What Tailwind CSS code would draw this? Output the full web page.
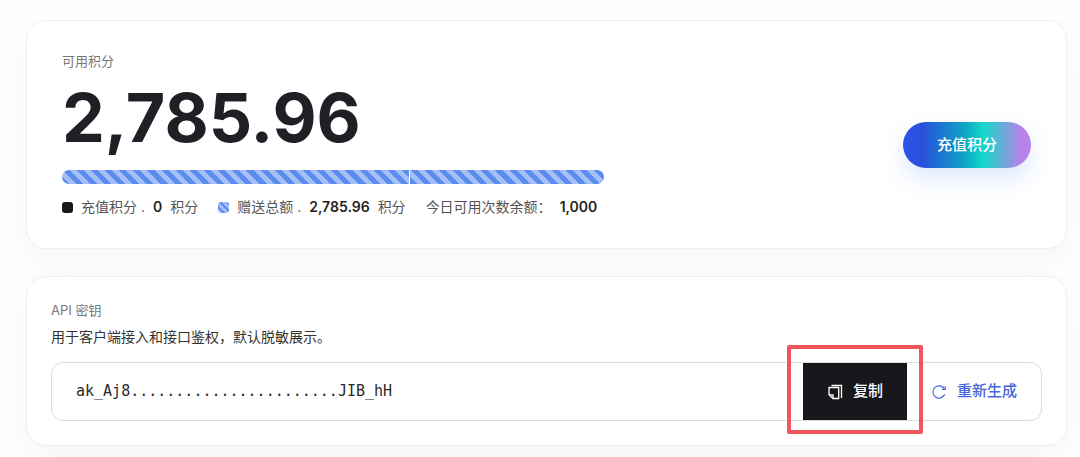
<!doctype html>
<html lang="zh-CN">
  <head>
    <meta charset="UTF-8" />
    <meta name="viewport" content="width=device-width, initial-scale=1.0" />
    <title>可用积分</title>
    <script src="https://cdn.jsdelivr.net/npm/@tailwindcss/browser@4"></script>
  </head>
  <body
    class="bg-[#fefefe] font-['Inter','Noto_Sans_CJK_SC',sans-serif] text-[#1f1f26]"
  >
    <main class="flex flex-col gap-[27px] pt-5 pr-[13px] pb-3 pl-[26px]">
      <section
        class="flex items-center justify-between rounded-[20px] border border-[#efefef] bg-white px-[35px] pt-[30px] pb-[29px] shadow-[0_16px_40px_rgba(0,0,0,0.035)]"
      >
        <div>
          <h2 class="text-[13px] leading-5 text-[#777]">可用积分</h2>
          <p class="mt-[7px] text-[68px] leading-[78px] font-bold">2,785.96</p>
          <div
            class="mt-[14px] flex h-[14px] gap-px overflow-hidden rounded-full"
          >
            <div
              class="w-[64%] bg-[repeating-linear-gradient(45deg,#5b8def_0_5px,#a5bef5_5px_10px)]"
            ></div>
            <div
              class="flex-1 bg-[repeating-linear-gradient(45deg,#5b8def_0_5px,#a5bef5_5px_10px)]"
            ></div>
          </div>
          <ul
            class="mt-[11px] flex w-[542px] items-center gap-5 text-[14px] leading-6 whitespace-nowrap text-[#555]"
          >
            <li class="flex items-center gap-2">
              <span class="size-[11px] rounded-[3px] bg-[#18181b]"></span>
              <span>充值积分 .</span>
              <strong class="font-semibold text-[#1f1f1f]">0</strong>
              <span>积分</span>
            </li>
            <li class="flex items-center gap-2">
              <span
                class="size-[11px] rounded-[3px] bg-[repeating-linear-gradient(45deg,#a5bef5_0_3px,#5b8def_3px_5px)]"
              ></span>
              <span>赠送总额 .</span>
              <strong class="font-semibold text-[#1f1f1f]">2,785.96</strong>
              <span>积分</span>
            </li>
            <li class="flex items-center gap-2">
              <span>今日可用次数余额：</span>
              <strong class="font-semibold text-[#1f1f1f]">1,000</strong>
            </li>
          </ul>
        </div>
        <button
          type="button"
          class="mt-5 h-[46px] w-32 rounded-full bg-[linear-gradient(90deg,#2f54eb_0%,#2850dc_15%,#0ea5c6_48%,#14d8c8_63%,#b583ea_92%)] text-[15px] font-medium text-white shadow-[0_10px_24px_rgba(59,130,246,0.18)]"
        >
          充值积分
        </button>
      </section>

      <section
        class="rounded-[20px] border border-[#efefef] bg-white px-6 pt-[23px] pb-6 shadow-[0_16px_40px_rgba(0,0,0,0.035)]"
      >
        <h2 class="text-[13px] leading-5 text-[#777]">API 密钥</h2>
        <p class="mt-[5px] text-[14px] leading-6 text-[#333]">
          用于客户端接入和接口鉴权，默认脱敏展示。
        </p>
        <div
          class="mt-[13px] flex h-[59px] items-stretch rounded-xl border border-[#dcdcdc]"
        >
          <input
            type="text"
            readonly
            aria-label="API 密钥"
            value="ak_Aj8.......................JIB_hH"
            class="min-w-0 flex-1 bg-transparent px-6 font-['DejaVu_Sans_Mono',monospace] text-[15px] text-[#2b2b2b] outline-none"
          />
          <div class="relative flex">
            <button
              type="button"
              class="flex w-[104px] items-center justify-center gap-[10px] bg-[#18181c] text-[15px] font-medium text-white"
            >
              <svg
                class="size-4"
                viewBox="0 0 16 16"
                fill="none"
                stroke="currentColor"
                stroke-width="1.3"
              >
                <path d="M4.5 1.5h10v12.5" />
                <path d="M2 3.5h9.7v11H6L2 10.8z" />
                <path d="M2 10.8h4v3.7" />
              </svg>
              复制
            </button>
            <span
              class="pointer-events-none absolute -inset-x-4 -top-[18px] -bottom-[14px] rounded-xs border-4 border-[#f2565a]"
            ></span>
          </div>
          <button
            type="button"
            class="flex w-[134px] items-center justify-center gap-[10px] text-[15px] font-medium text-[#4468dc]"
          >
            <svg
              class="size-4"
              viewBox="0 0 16 16"
              fill="none"
              stroke="currentColor"
              stroke-width="1.2"
            >
              <path d="M13.7 10.3A6.1 6.1 0 1 1 13.4 5" />
              <path d="M14.2 2.2v3.2H11" />
            </svg>
            重新生成
          </button>
        </div>
      </section>
    </main>
  </body>
</html>
